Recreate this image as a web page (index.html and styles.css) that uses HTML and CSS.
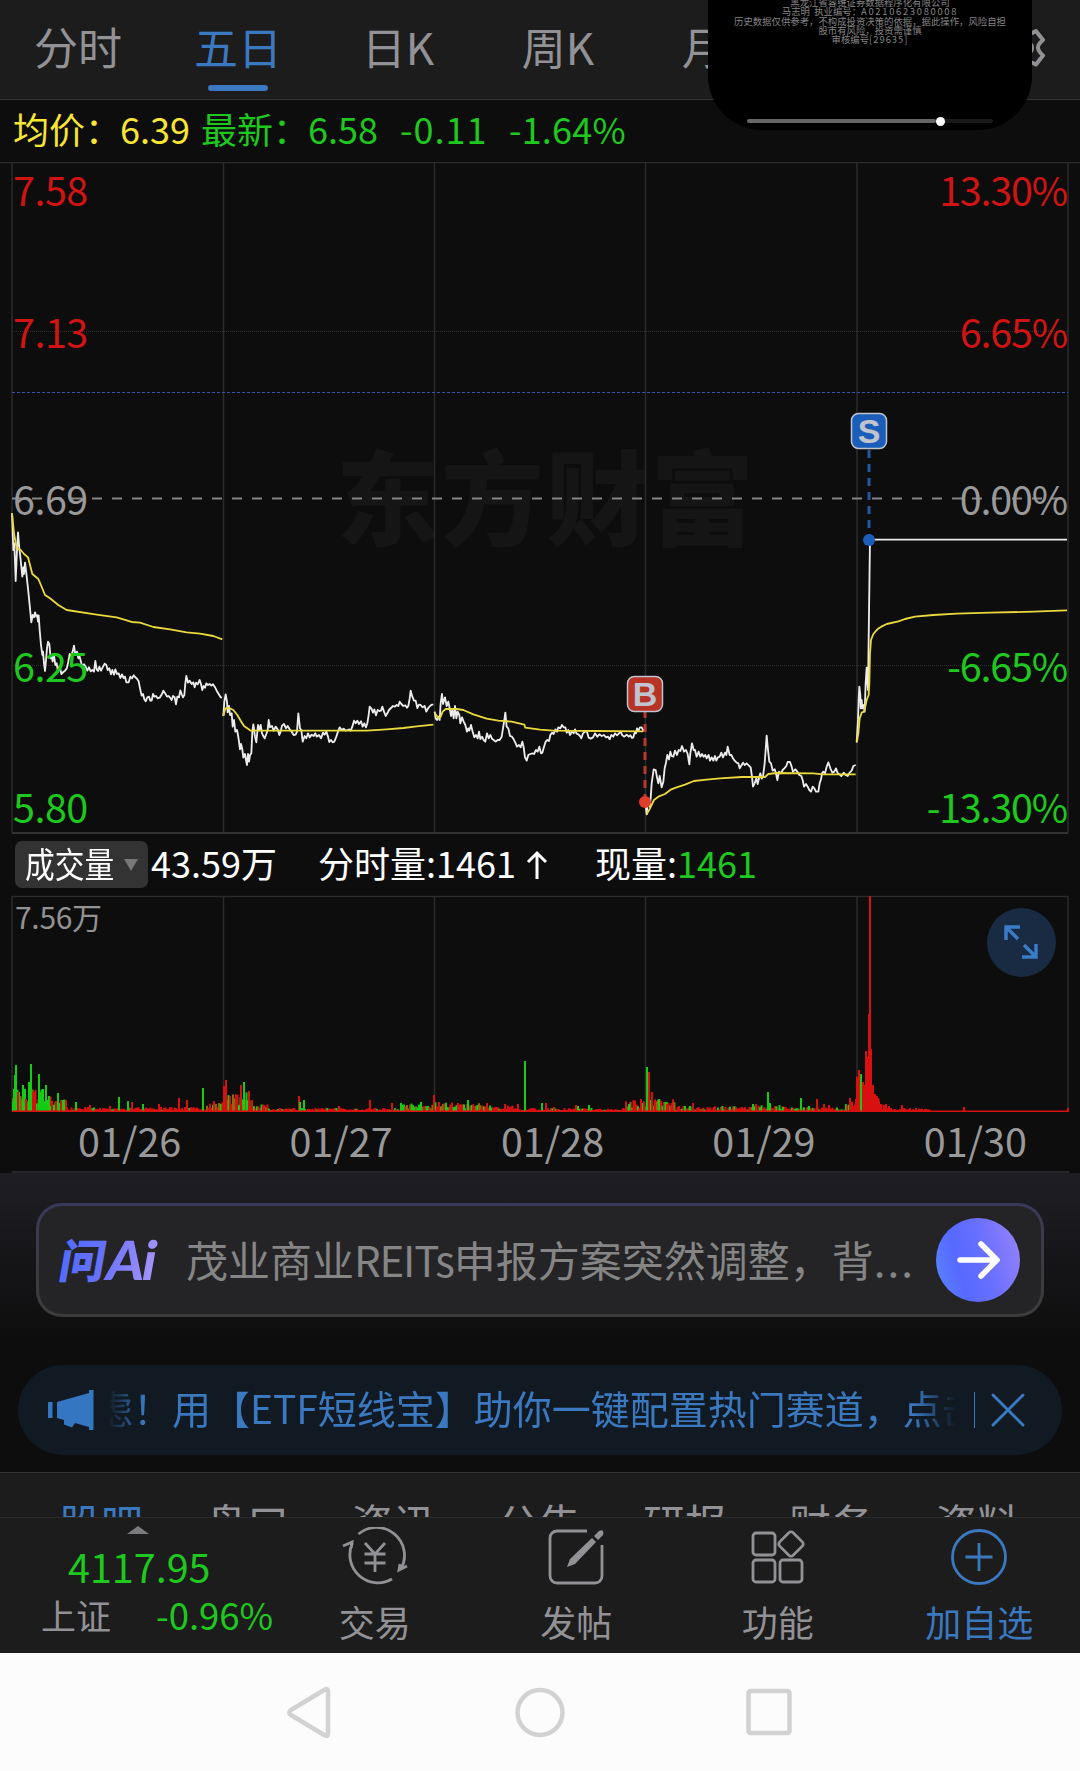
FILE: index.html
```html
<!DOCTYPE html>
<html lang="zh-CN">
	<head>
		<meta charset="utf-8">
		<title>五日</title>
		<link rel="stylesheet" href="styles.css">
	</head>
	<body>
		<header>
			<nav class="tabs">
				<span class="tab">分时</span>
				<span class="tab active">五日</span>
				<span class="tab">日K</span>
				<span class="tab">周K</span>
				<span class="tab">月K</span>
			</nav>
			<svg class="gear" width="40" height="40" viewBox="0 0 40 40"><path d="M12 4q4 3 8 0 4 3 10-1l7 9q-5 4-5 7.500t5 8l-7 9q-6-4-10-1-4-3-8 0l-8-8q5-4 5-8t-5-8z"/><circle cx="20" cy="20" r="6"/></svg>
		</header>
		<div id="float">
			<div class="subtitles">
				<p>黑龙江省容维证券数据程序化有限公司</p>
				<p>马志明&nbsp; 执业编号：<span class="wide">A0210623080008</span></p>
				<p>历史数据仅供参考，不构成投资决策的依据，据此操作，风险自担</p>
				<p>股市有风险，投资需谨慎</p>
				<p>审核编号<span class="code">[29635]</span></p>
			</div>
			<div class="progress"><div class="played"></div><div class="dot"></div></div>
		</div>
		<div id="info">
			<span class="avg">均价：</span><span class="avg value">6.39</span>
			<span class="last">最新：</span><span class="last value">6.58</span>
			<span class="change">-0.11</span><span class="percent">-1.64%</span>
		</div>
		<svg id="price" width="1080" height="672" viewBox="0 162 1080 672">
			<g class="watermark"><text x="336 441 546 651" y="538">东方财富</text></g>
			<path class="grid" d="M0 162.5H1080M12 163V833M223.5 163V833M434.5 163V833M645.5 163V833M857 163V833M1068 163V833"/>
			<path class="grid bottom" d="M12 833H1068"/>
			<path class="dots" d="M12 331.5H1068M12 665.5H1068"/>
			<path class="limit" d="M12 392.5H1068"/>
			<path class="zero" d="M12 498.5H1068"/>
			<g transform="translate(0 480) scale(.33333)">
				<path class="line" d="M36 100L40 210 43 190 47 303 51 210 54 157 58 205 62 240 67 290 70 262 72 282 75 248 79 280 84 325 90 385 94 427 98 405 102 412 105 397 109 410 112 406 114 425 116 406 119 450 123 495 127 525 129 515 132 550 135 573 138 540 141 505 144 485 148 492 152 535 155 527 158 545 162 525 166 555 170 550 174 575 179 558 184 582 190 576 195 572 200 566 204 550 209 522 213 528 218 515 222 497 226 524 231 515 235 535 239 530 244 550 248 560 252 553 257 560 262 572 267 562 272 574 277 570 282 575 286 543 290 568 294 573 298 560 303 572 308 562 314 551 319 555 323 570 328 565 333 583 337 570 342 584 346 568 351 582 356 580 361 594 366 583 371 594 375 590 379 607 386 607 391 590 396 595 401 586 406 592 411 596 416 604 420 625 425 647 429 642 433 658 437 664 442 652 447 650 451 662 455 662 459 642 463 650 468 648 473 655 480 652 486 642 490 632 496 641 501 650 506 648 511 654 515 660 519 648 524 652 528 673 532 650 537 652 541 631 546 645 549 652 553 645 556 610 559 588 564 608 569 602 575 612 580 607 584 622 588 608 593 613 599 600 603 612 607 630 611 618 615 623 619 610 624 615 629 612 634 617 639 613 644 620 650 632 656 642 662 652 666 653"/>
				<path class="line" d="M670 708L673 665 677 643 681 665 683 697 687 678 690 705 695 700 698 740 702 720 706 755 711 750 714 765 717 785 720 808 723 792 727 808 730 833 735 822 738 840 741 855 744 822 747 845 750 825 754 820 757 755 760 733 765 770 769 787 774 735 778 750 782 735 786 760 790 768 794 775 799 762 803 750 806 720 810 742 816 738 821 752 827 740 833 748 838 765 842 755 846 737 852 732 858 745 863 738 869 748 875 755 881 765 887 764 891 755 895 700 900 745 904 750 908 785 914 768 919 775 924 760 929 772 935 764 941 768 946 760 950 770 957 765 963 775 969 758 974 764 979 755 984 770 988 786 993 780 998 787 1003 785 1009 770 1014 755 1019 742 1025 750 1031 746 1037 752 1043 750 1048 748 1052 752 1057 740 1062 722 1067 730 1072 722 1077 732 1083 724 1088 740 1093 730 1098 742 1102 730 1106 705 1109 680 1114 685 1119 698 1123 688 1128 706 1133 690 1138 693 1143 692 1147 680 1152 695 1157 708 1162 700 1167 690 1173 684 1179 678 1185 680 1190 675 1195 678 1199 665 1204 672 1210 678 1216 676 1221 683 1225 678 1229 656 1232 632 1237 650 1242 662 1247 662 1252 684 1257 674 1262 675 1268 682 1274 678 1279 695 1284 685 1290 678 1295 674 1300 674"/>
				<path class="avg-line" d="M36 100L42 160 50 205 62 210 72 222 84 232 90 255 97 282 115 297 124 318 135 345 150 355 175 375 200 390 290 404 350 412 395 426 420 428 460 441 510 448 560 457 600 461 640 468 667 478"/>
				<path class="avg-line" d="M670 708L676 685 688 684 700 690 712 705 722 722 732 738 745 747 752 752H1100L1160 748 1210 744 1250 739 1300 734"/>
			</g>
			<g transform="translate(430 640) scale(.33333)">
				<path class="line" d="M14 215L17 235 21 240 25 230 29 240 32 190 36 162 39 192 45 172 50 198 55 185 60 210 63 228 67 210 71 235 75 198 79 235 83 215 88 225 91 250 96 232 101 245 106 255 111 275 115 265 118 272 123 255 128 275 133 292 138 285 143 295 147 275 151 297 156 290 161 300 166 305 171 280 176 295 181 285 186 296 191 300 197 305 203 300 209 300 215 290 219 265 223 240 226 218 230 260 235 265 240 288 246 290 251 298 256 308 261 320 267 315 272 322 277 305 281 322 285 352 290 362 295 345 301 342 307 340 312 342 318 330 323 335 328 320 333 340 337 338 342 320 347 305 352 300 357 303 361 285 366 278 371 282 376 268 381 275 385 262 391 265 396 255 401 262 406 262 410 278 415 270 420 285 425 275 431 280 435 268 439 280 445 283 450 288 454 295 459 280 465 275 471 275 476 293 482 296 489 292 495 280 502 290 508 283 515 288 522 285 528 292 534 290 539 298 544 285 550 290 555 280 561 286 567 280 572 275 577 286 583 290 590 284 596 290 601 286 606 294 610 292 614 278 618 280 621 265 625 272 630 262 635 262 640 272 644 268"/>
				<path class="line" d="M646 485L650 523 654 480 659 500 662 475 665 430 671 388 677 390 681 412 685 430 689 408 695 442 700 425 704 385 708 368 712 345 717 358 721 335 725 348 730 350 735 332 741 345 746 330 751 333 756 318 762 335 768 330 773 342 778 373 781 340 786 310 791 330 795 330 800 350 806 335 811 350 816 342 821 350 826 345 830 355 836 345 840 362 845 352 850 362 855 348 859 362 864 352 869 350 874 338 879 352 885 338 889 345 893 320 899 345 904 345 909 355 914 362 920 368 925 370 929 385 935 375 939 368 944 375 950 370 956 376 962 382 966 410 969 440 974 430 979 415 983 432 987 415 991 400 995 416 999 410 1004 370 1007 330 1010 287 1014 330 1018 365 1023 370 1028 392 1034 388 1038 400 1042 420 1047 395 1053 400 1058 390 1063 385 1069 378 1073 366 1080 366 1085 380 1089 395 1096 388 1102 395 1108 405 1114 408 1118 420 1122 440 1128 432 1133 440 1138 450 1143 455 1148 440 1153 445 1158 455 1165 455 1169 430 1173 418 1176 400 1180 395 1185 400 1190 380 1195 367 1201 385 1207 398 1213 395 1218 385 1223 400 1228 402 1234 408 1241 398 1247 405 1253 408 1259 398 1265 392 1270 378 1277 375"/>
				<path class="avg-line" d="M14 218L25 235 32 230 38 215 47 207H80L100 210 130 223 170 236 205 242 245 245 283 254 286 263 330 269 370 272 500 273 640 274"/>
				<path class="avg-line" d="M650 523L660 505 672 480 685 470 705 462 722 449 740 442 765 434 792 423 830 419 870 415 935 411H1005L1015 402 1040 399 1150 400 1180 403H1277"/>
			</g>
			<g transform="translate(640 400) scale(.33333)">
				<path class="line" d="M650 1028L654 960 656 900 658 860 661 885 662 925 665 900 667 925 671 915 674 935 677 850 680 803 682 845 684 870 687 640 690 419H1281"/>
				<path class="avg-line" d="M651 1025L655 1000 659 955 665 938 672 935 677 915 680 900 686 885 688 850 690 760 693 720 700 702 712 688 724 680 740 672 775 664 795 657 825 650 880 645 950 641 1050 638 1180 635 1281 631"/>
			</g>
			<path class="mark-s" d="M869 450V536"/>
			<circle class="s-fill" cx="869" cy="540" r="6"/>
			<rect class="mark s-fill" x="851.5" y="413.5" width="35" height="35" rx="7"/>
			<text class="mark-text" x="869" y="443">S</text>
			<path class="mark-b" d="M645 710V798"/>
			<circle class="b-fill" cx="645" cy="802" r="6"/>
			<rect class="mark b-fill" x="627.5" y="676.5" width="35" height="35" rx="7"/>
			<text class="mark-text" x="645" y="706">B</text>
			<g class="axis">
				<text class="up" x="13" y="206">7.58</text>
				<text class="up" x="13" y="348">7.13</text>
				<text x="13" y="515">6.69</text>
				<text class="down" x="13" y="682">6.25</text>
				<text class="down" x="13" y="823">5.80</text>
			</g>
			<g class="axis right">
				<text class="up" x="1067" y="206">13.30%</text>
				<text class="up" x="1067" y="348">6.65%</text>
				<text x="1067" y="515">0.00%</text>
				<text class="down" x="1067" y="682">-6.65%</text>
				<text class="down" x="1067" y="823">-13.30%</text>
			</g>
		</svg>
		<div id="volume-info">
			<div class="picker"><span>成交量</span><i></i></div>
			<span class="total">43.59万</span>
			<span class="minute">分时量:1461</span>
			<svg width="24" height="30" viewBox="0 0 24 30"><path d="M12 29V3M3 12l9-9 9 9"/></svg>
			<span>现量:<b>1461</b></span>
		</div>
		<div id="volume">
			<svg width="1080" height="218" viewBox="0 895 1080 218">
				<path class="grid" d="M12 896.5H1068M12 896V1112M223.5 896V1112M434.500 896V1112M645.5 896V1112M857 896V1112M1068 896V1112"/>
				<g id="bars"></g>
				<text class="max" x="15" y="929">7.56万</text>
			</svg>
			<div class="expand"><svg width="34" height="35" viewBox="0 0 34 35"><path d="M14 14L2 2M2 15V2h14M20 20l12 12M32 19v13H18"/></svg></div>
		</div>
		<div id="dates"><span>01/26</span><span>01/27</span><span>01/28</span><span>01/29</span><span>01/30</span></div>
		<div id="ai">
			<div class="box">
				<svg class="logo" width="104" height="54" viewBox="0 0 104 54">
					<defs><linearGradient id="violet" x1="0" x2="104" gradientUnits="userSpaceOnUse"><stop offset="0" stop-color="#4f6bff"/><stop offset=".45" stop-color="#6670fb"/><stop offset="1" stop-color="#a795fa"/></linearGradient></defs>
					<g transform="skewX(-10)"><text class="ask" x="6" y="45">问</text><text class="ai" x="53" y="47">Ai</text></g>
				</svg>
				<span class="question">茂业商业<span>REITs</span>申报方案突然调整，背<span class="more">...</span></span>
				<div class="go"><svg width="50" height="42" viewBox="0 0 50 42"><path d="M7 21h37M28 5l16 16-16 16"/></svg></div>
			</div>
		</div>
		<div id="notice">
			<svg class="horn" width="46" height="40" viewBox="0 0 46 40"><path d="M0 12h4.500v16H0zM9 12L41 3V0h4.500v40H41v-3L27 33l-3 4.500-8-3V30L9 28z"/></svg>
			<div class="marquee"><span>虑！用【ETF短线宝】助你一键配置热门赛道，点击</span></div>
			<i class="divider"></i>
			<svg class="close" width="34" height="34" viewBox="0 0 34 34"><path d="M2 2l30 30M32 2L2 32"/></svg>
		</div>
		<div id="sections"><span class="active">股吧</span><span>盘口</span><span>资讯</span><span>公告</span><span>研报</span><span>财务</span><span>资料</span></div>
		<div id="toolbar">
			<div class="index">
				<i></i>
				<div class="points">4117.95</div>
				<div class="row"><span>上证</span><b>-0.96%</b></div>
			</div>
			<div class="tool">
				<svg width="66" height="60" viewBox="0 0 66 60"><path d="M16.500 7A28 28 0 0 1 59 42M50 52A28 28 0 0 1 10.500 16"/><path d="M1 19l9-4-1 6M65 39l-8 4 1-6"/><path d="M23 16l10 11 10-11M33 26v19M22.500 27h21M22.500 36h21"/></svg>
				<span>交易</span>
			</div>
			<div class="tool">
				<svg width="60" height="60" viewBox="0 0 60 60"><path d="M41 4H11a7 7 0 0 0-7 7v38a7 7 0 0 0 7 7h38a7 7 0 0 0 7-7V18"/><path class="solid" d="M21 40l3-8L46 11l4 4-21 22zM48 9l5-5q3-1.500 4 0t0 4l-5 5z"/></svg>
				<span>发帖</span>
			</div>
			<div class="tool">
				<svg width="60" height="60" viewBox="0 0 60 60"><rect x="5" y="6" width="22" height="22" rx="3"/><rect x="5" y="33" width="22" height="22" rx="3"/><rect x="32" y="33" width="22" height="22" rx="3"/><rect x="33.500" y="7.500" width="19" height="19" rx="3" transform="rotate(45 43 17)"/></svg>
				<span>功能</span>
			</div>
			<div class="tool add">
				<svg width="60" height="60" viewBox="0 0 60 60"><circle cx="30" cy="30" r="26.500"/><path d="M30 16v28M16.500 30h27"/></svg>
				<span>加自选</span>
			</div>
		</div>
		<footer>
			<svg width="1080" height="118" viewBox="0 0 1080 118"><path d="M325 36.500q3-1.500 3 2v42q0 3.500-3 2L291 62q-3.500-2.500 0-5z"/><circle cx="540" cy="59.500" r="22.500"/><rect x="748.500" y="38" width="41" height="42" rx="2"/></svg>
		</footer>
		<script src="volume.js"></script>
	</body>
</html>
```
FILE: styles.css
```css
* {
	box-sizing: border-box;
}
body {
	width: 1080px;
	height: 1771px;
	margin: 0;
	position: relative;
	overflow: hidden;
	background-color: #0d0d0d;
	color: #929296;
	font-family: "Noto Sans CJK SC", sans-serif;
	line-height: 1;
}
p {
	margin: 0;
}
svg {
	display: block;
	flex-shrink: 0;
}
b {
	font-weight: normal;
}
path, circle, rect {
	fill: none;
}
header {
	height: 100px;
	display: flex;
	background-color: #1c1c1c;
	border-bottom: 1px solid #333;
}
.tabs {
	display: flex;
	width: 1006px;
}
	.tab {
		width: 160px;
		height: 92px;
		padding-top: 24px;
		margin-left: -2px;
		margin-right: 2px;
		text-align: center;
		font-size: 44px;
	}
	.tab.active {
		color: #3a78c0;
	}
	.tab.active:after {
		content: "";
		display: block;
		width: 60px;
		height: 6px;
		margin: 17px auto 0;
		border-radius: 3px;
		background-color: #3a78c0;
	}
	.gear {
		margin-top: 28px;
	}
	.gear path, .gear circle {
		stroke: #929296;
		stroke-width: 4;
		stroke-linejoin: round;
	}
/* the floating video window, over the tabs */
#float {
	position: absolute;
	left: 708px;
	top: 0;
	width: 324px;
	height: 130px;
	border-radius: 0 0 54px 54px;
	background-color: #000;
	overflow: hidden;
}
	.subtitles {
		margin-top: -2px;
		height: 121px;
		text-align: center;
		font-size: 9.4px;
		line-height: 9.3px;
		white-space: nowrap;
		color: #858585;
	}
	.wide {
		letter-spacing: 1.7px;
	}
	.code {
		letter-spacing: 1px;
	}
	.progress {
		display: flex;
		align-items: center;
		width: 246px;
		height: 4px;
		margin-left: 39px;
		border-radius: 2px;
		background-color: #1a1a1a;
	}
	.played {
		width: 189px;
		height: 4px;
		border-radius: 2px;
		background-color: #666;
	}
	.dot {
		width: 9px;
		height: 9px;
		flex-shrink: 0;
		border-radius: 50%;
		background-color: #fff;
	}
#info {
	display: flex;
	height: 62px;
	padding: 10px 0 0 13px;
	font-size: 36px;
	color: #1ec81e;
	white-space: nowrap;
}
	#info span {
		display: block;
	}
	#info .avg {
		width: 107px;
		color: #f8e633;
	}
	#info .avg.value {
		width: 81px;
	}
	#info .last {
		width: 107px;
	}
	#info .last.value {
		width: 92px;
	}
	#info .change {
		width: 109px;
		letter-spacing: 1px;
	}
	#info .percent {
		letter-spacing: .2px;
	}
.grid {
	stroke: #2b2b2b;
	stroke-width: 1.500px;
}
.grid.bottom {
	stroke-width: 2px;
	stroke: #333;
}
.dots {
	stroke: #303030;
	stroke-dasharray: 1 1;
}
.limit {
	stroke: #3457ac;
	stroke-dasharray: 3 2;
}
.zero {
	stroke: #858585;
	stroke-width: 2px;
	stroke-dasharray: 10 10;
}
.watermark {
	fill: #151515;
	font-size: 103px;
	font-weight: 900;
}
.line, .avg-line {
	stroke: #ececec;
	stroke-width: 5.500px;
	stroke-linejoin: round;
}
.avg-line {
	stroke: #e9d93d;
}
.mark-s, .mark-b {
	stroke: #2558a0;
	stroke-width: 3px;
	stroke-dasharray: 8 6;
}
.mark-b {
	stroke: #b83a2e;
}
.s-fill {
	fill: #1b5eb9;
}
.b-fill {
	fill: #b73326;
}
circle.b-fill {
	fill: #e23d2b;
}
.mark {
	stroke: #c0c4cf;
	stroke-width: 1.500px;
}
.mark-text {
	fill: #c0c4cf;
	font-family: "Liberation Sans", sans-serif;
	font-size: 34px;
	font-weight: bold;
	text-anchor: middle;
}
.axis {
	fill: #999;
	font-size: 39.500px;
	letter-spacing: -.5px;
}
.axis.right {
	text-anchor: end;
	letter-spacing: -1.2px;
}
.axis .up {
	fill: #d01414;
}
.axis .down {
	fill: #1ec81e;
}
#volume-info {
	display: flex;
	align-items: center;
	height: 61px;
	padding: 0 0 0 15px;
	font-size: 36px;
	color: #fff;
	white-space: nowrap;
}
	.picker {
		display: flex;
		align-items: center;
		width: 133px;
		height: 47px;
		padding-left: 10px;
		border-radius: 7px;
		background-color: #333;
	}
	.picker span {
		width: 99px;
		padding-bottom: 5px;
		font-size: 35px;
		transform: scaleX(.85);
		transform-origin: left;
	}
	.picker i {
		border: 7px solid transparent;
		border-top: 12px solid #777;
		border-bottom: 0;
	}
	#volume-info > span {
		padding-bottom: 6px;
	}
	.total {
		width: 170px;
		padding-left: 3px;
	}
	.minute {
		width: 207px;
	}
	#volume-info svg {
		margin-right: 46px;
	}
	#volume-info path {
		stroke: #fff;
		stroke-width: 3px;
	}
	#volume-info b {
		color: #1ec81e;
	}
#volume {
	position: relative;
	height: 218px;
}
	.max {
		fill: #929292;
		font-size: 30px;
		letter-spacing: -.3px;
	}
	/* the zoom button lies over the bars */
	.expand {
		position: absolute;
		left: 987px;
		top: 13px;
		width: 69px;
		height: 69px;
		padding: 17px;
		border-radius: 50%;
		background-color: #182b42;
	}
	.expand path {
		stroke: #3a7cc7;
		stroke-width: 3.5px;
	}
	.r {
		fill: #d81010;
	}
	.g {
		fill: #14cc14;
	}
	.mix {
		fill: #8a6a10;
	}
#dates {
	display: flex;
	height: 60px;
	margin: 0 11px 0 12px;
	padding-top: 7px;
	border-bottom: 2px solid #262628;
	font-size: 39.500px;
	color: #999;
}
	#dates span {
		width: 211.500px;
		padding-left: 24px;
		text-align: center;
	}
#ai {
	height: 192px;
	padding: 30px 36px 0;
	background: linear-gradient(#1e1e24, #0d0d0d 90%);
}
	.box {
		display: flex;
		align-items: center;
		height: 114px;
		padding: 0 21px 0 20px;
		border: 3px solid transparent;
		border-radius: 26px;
		background: linear-gradient(#242426, #242426) padding-box, linear-gradient(#39395a, #3d3b3c 70%) border-box;
	}
	.logo text {
		fill: url(#violet);
		font-weight: 900;
	}
	.logo .ask {
		font-size: 46px;
	}
	.logo .ai {
		font-family: "Lato", sans-serif;
		font-size: 54px;
		letter-spacing: -2px;
	}
	.question {
		width: 750px;
		padding: 0 0 3px 23px;
		font-size: 42px;
		white-space: nowrap;
		color: #858585;
	}
	.question span {
		letter-spacing: -1.2px;
	}
	.question .more {
		letter-spacing: 2px;
	}
	.go {
		width: 84px;
		height: 84px;
		flex-shrink: 0;
		margin-left: auto;
		padding: 21px 17px;
		border-radius: 50%;
		background: linear-gradient(75deg, #5a86ff, #5669ff 30%, #6b70ff 60%, #9a85f8);
	}
	.go path {
		stroke: #fff;
		stroke-width: 5.5px;
		stroke-linecap: round;
		stroke-linejoin: round;
	}
#notice {
	display: flex;
	align-items: center;
	height: 90px;
	margin: 0 18px;
	padding-left: 30px;
	border-radius: 45px;
	background-color: #111a23;
	color: #3a78c0;
}
	.horn path {
		fill: #3576c2;
	}
	.marquee {
		width: 852px;
		margin-left: 14px;
		padding-bottom: 7px;
		overflow: hidden;
		-webkit-mask-image: linear-gradient(90deg, transparent, #000 36px, #000 806px, transparent 848px);
		mask-image: linear-gradient(90deg, transparent, #000 36px, #000 806px, transparent 848px);
	}
	.marquee span {
		display: block;
		margin-left: -14px;
		font-size: 39px;
		line-height: 46px;
		white-space: nowrap;
	}
	.divider {
		width: 1px;
		height: 36px;
		margin: 0 16px 0 14px;
		background-color: #3a78c0;
	}
	.close path {
		stroke: #3a78c0;
		stroke-width: 3px;
		stroke-linecap: round;
	}
#sections {
	display: flex;
	height: 45px;
	margin-top: 17px;
	padding: 28px 29px 0 28px;
	overflow: hidden;
	border-top: 1px solid #333;
	background-color: #1c1c1c;
	font-size: 42px;
}
	#sections span {
		width: 146px;
		flex-shrink: 0;
		text-align: center;
	}
	#sections .active {
		color: #3a78c0;
	}
#toolbar {
	display: flex;
	height: 136px;
	border-top: 1px solid #2a2a2a;
	background-color: #1c1c1c;
}
	.index {
		width: 274px;
		padding-top: 8px;
		color: #1ec81e;
	}
	.index i {
		display: block;
		width: 0;
		margin-left: 127px;
		border: 11px solid transparent;
		border-bottom: 8px solid #7c7c80;
		border-top: 0;
	}
	.points {
		height: 49px;
		padding: 12px 0 0 68px;
		font-size: 39.500px;
	}
	.row {
		display: flex;
		padding: 14px 0 0 41px;
		color: #929296;
		font-size: 35px;
	}
	.row b {
		margin-left: 45px;
		font-size: 36.500px;
		color: #1ec81e;
	}
	.tool {
		width: 201.500px;
		padding-top: 9px;
		text-align: center;
		font-size: 36px;
	}
	.tool svg {
		margin: 0 auto 16px;
	}
	.tool span {
		display: block;
	}
	.tool path, .tool rect, .tool circle {
		stroke: #929296;
		stroke-width: 2.800px;
	}
	.tool .solid {
		stroke: none;
		fill: #929296;
	}
	.add {
		color: #3a78c0;
	}
	.tool.add path, .tool.add circle {
		stroke: #3a78c0;
	}
footer {
	height: 118px;
	background-color: #fcfcfc;
}
	footer path, footer circle, footer rect {
		stroke: #d2d2d2;
		stroke-width: 4.500px;
	}
```
FILE: volume.js
```js
var BASE = 1112;
// [x, height] of the bars that stand out from the rest
var green = [[12,10],[13,23],[14,37],[15,47],[22,27],[28,30],[30,48],[38,38],[40,20],[42,23],[45,27],[48,16],[57,19],[62,12],[75,10],[118,15],[127,11],[142,8],[202,24],[243,30],[299,10],[303,12],[400,9],[420,10],[467,12],[524,51],[541,9],[577,6],[588,7],[628,8],[646,45],[658,13],[684,6],[689,6],[752,8],[767,20],[769,9],[782,5],[800,14],[808,6],[860,38]];
var red = [[17,20],[25,13],[32,20],[51,11],[55,11],[60,11],[65,8],[89,7],[109,6],[131,10],[158,8],[178,14],[186,12],[213,11],[223,26],[225,32],[229,16],[240,27],[248,21],[251,12],[298,16],[338,6],[369,12],[391,9],[433,17],[438,10],[457,9],[486,9],[504,8],[517,8],[545,9],[553,5],[575,7],[633,9],[640,13],[648,40],[651,20],[654,12],[666,8],[671,9],[678,6],[692,9],[755,8],[816,13],[823,8],[828,7],[849,14],[855,13],[858,42],[862,30],[863,27],[865,61],[866,55],[868,98],[869,216],[870,63],[872,27],[874,18],[876,14],[878,11],[880,8],[883,7],[885,8],[888,6],[890,4],[901,7],[903,4],[909,4],[925,3],[963,5],[1067,4]];
// [from, to, usual height, share of red]
var ranges = [[12,50,24,.3],[50,66,13,.6],[66,130,5,.7],[130,206,5,.9],[206,220,10,.6],[220,250,20,.55],[250,268,10,.6],[268,400,4,.75],[400,430,9,.5],[430,480,10,.6],[480,520,7,.7],[520,625,4,.75],[625,645,12,.7],[645,675,13,.65],[675,750,6,.6],[750,785,7,.5],[785,845,5,.6],[845,856,13,.8],[856,870,36,.65],[870,882,16,1],[882,930,4,1]];
var out = "";
function bar(x, h, c) {
	out += '<rect class="' + c + '" x="' + x + '" y="' + (BASE - h) + '" width="2" height="' + h + '"/>';
}
function noise(n) {
	var v = Math.sin(n * 127.1) * 43758.5453;
	return v - Math.floor(v);
}
ranges.forEach(function(r){
	for(var x = r[0]; x < r[1]; x += 1.5){
		var h = Math.max(2, r[2] * (.35 + .65 * noise(x)));
		var c = noise(x + 7) < r[3] ? "r" : "g";
		if(r[2] > 8 && r[3] < 1 && noise(x + 3) > .7) c = "mix";
		bar(x, h, c);
	}
});
red.forEach(function(b){ bar(b[0], b[1], "r"); });
green.forEach(function(b){ bar(b[0], b[1], "g"); });
out += '<rect class="r" x="12" y="1110.500" width="1056" height="1.500"/>';
document.getElementById("bars").innerHTML = out;
```
